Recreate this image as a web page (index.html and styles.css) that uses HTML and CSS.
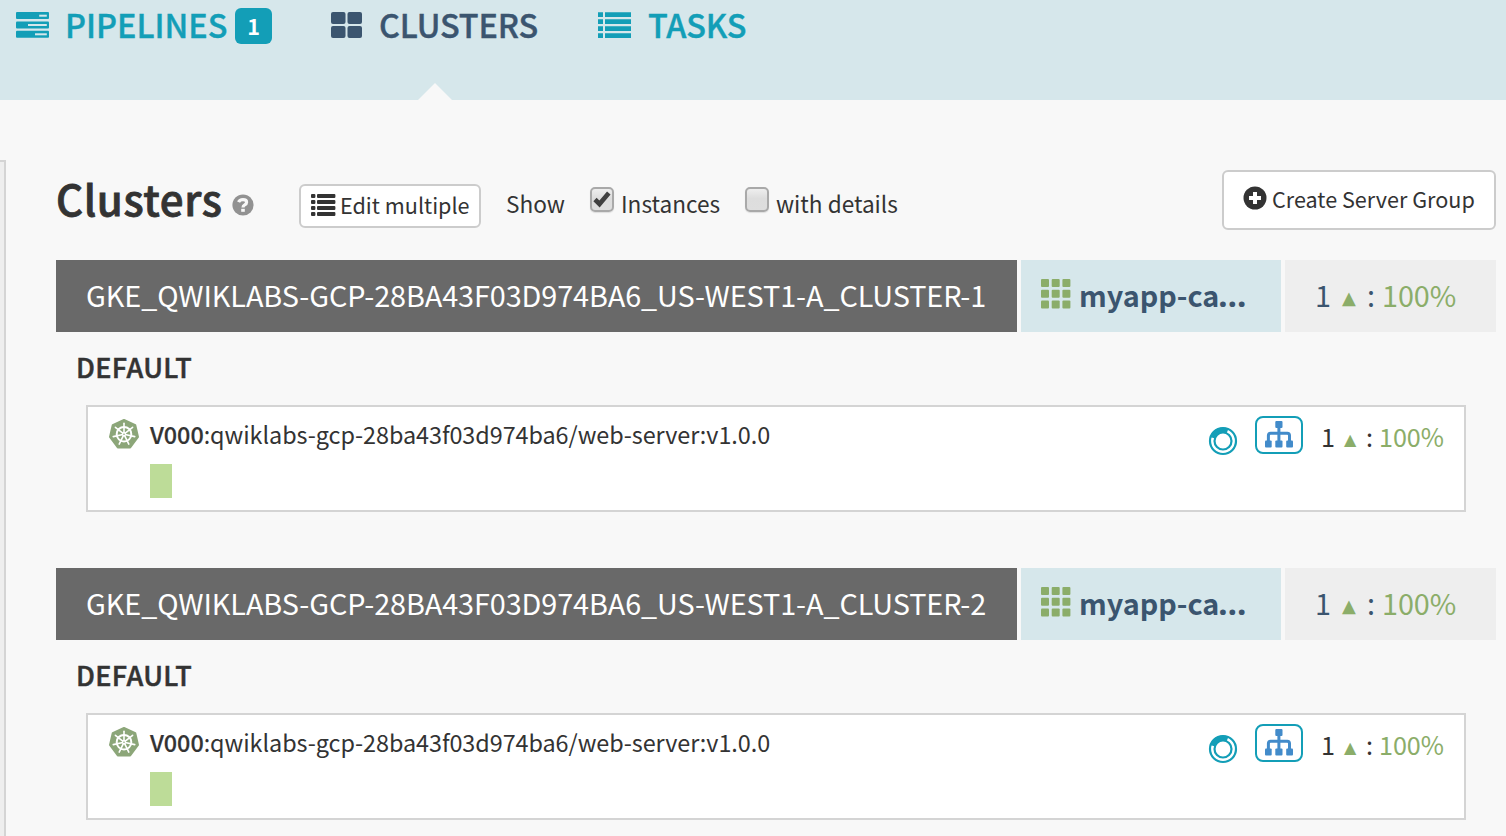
FILE: index.html
```html
<!DOCTYPE html>
<html lang="en">
<head>
<meta charset="utf-8">
<title>Clusters</title>
<link rel="stylesheet" href="styles.css">
</head>
<body>
<svg class="defs" width="0" height="0" aria-hidden="true">
  <symbol id="i-grid" viewBox="0 0 30 30">
    <g fill="currentColor"><rect width="8" height="8" rx="1"/><rect x="10.7" width="8" height="8" rx="1"/><rect x="21.4" width="8" height="8" rx="1"/><rect y="10.7" width="8" height="8" rx="1"/><rect x="10.7" y="10.7" width="8" height="8" rx="1"/><rect x="21.4" y="10.7" width="8" height="8" rx="1"/><rect y="21.4" width="8" height="8" rx="1"/><rect x="10.7" y="21.4" width="8" height="8" rx="1"/><rect x="21.4" y="21.4" width="8" height="8" rx="1"/></g>
  </symbol>
  <symbol id="i-k8s" viewBox="0 0 30 30">
    <path fill="#8ca679" stroke="#8ca679" stroke-width="2" stroke-linejoin="round" d="M15 1 L26.3 6.1 L29 18 L21.2 28.5 L8.8 28.5 L1 18 L3.7 6.1 Z"/>
    <g stroke="#fff" fill="none">
      <circle cx="15" cy="15.2" r="7.3" stroke-width="2"/>
      <g stroke-width="1.6" stroke-linecap="round">
        <path id="spoke" d="M15 14V4.2"/>
        <use href="#spoke" transform="rotate(51.43 15 15.2)"/><use href="#spoke" transform="rotate(102.86 15 15.2)"/><use href="#spoke" transform="rotate(154.29 15 15.2)"/><use href="#spoke" transform="rotate(205.71 15 15.2)"/><use href="#spoke" transform="rotate(257.14 15 15.2)"/><use href="#spoke" transform="rotate(308.57 15 15.2)"/>
      </g>
    </g>
    <circle cx="15" cy="15.2" r="2.1" fill="#fff"/><circle cx="15" cy="15.2" r=".8" fill="#8ca679"/>
  </symbol>
  <symbol id="i-ring" viewBox="0 0 30 30">
    <g fill="none" stroke="#139eb7"><circle cx="15" cy="15" r="13" stroke-width="2.2"/><circle cx="15" cy="15" r="8.5" stroke-width="2.2"/><path stroke-width="5" d="M4.6 11.8A10.9 10.9 0 0 1 19.5 5.1"/></g>
  </symbol>
  <symbol id="i-tree" viewBox="0 0 28 27">
    <g fill="#428bca"><rect x="10.3" width="7.2" height="7" rx="1"/><rect y="19.5" width="6.7" height="7" rx="1"/><rect x="10.3" y="19.5" width="7.2" height="7" rx="1"/><rect x="21.2" y="19.5" width="6.8" height="7" rx="1"/></g>
    <path fill="none" stroke="#428bca" stroke-width="3" d="M13.9 6V20M3.4 20V14.5Q3.4 12.2 5.6 12.2H22.3Q24.5 12.2 24.5 14.5V20"/>
  </symbol>
</svg>

<nav class="tabs">
  <a class="tab pipelines">
    <svg class="tab-icon" width="33" height="26" viewBox="0 0 33 26"><g fill="currentColor"><rect width="33" height="7" rx="1"/><rect y="9.4" width="33" height="7" rx="1"/><rect y="18.8" width="33" height="7" rx="1"/></g><g fill="#d6e7eb"><rect x="23.2" y="2.7" width="7.6" height="2"/><rect x="12" y="12" width="18.8" height="2"/><rect x="19" y="21.3" width="11.8" height="2"/></g></svg>
    <span class="tab-text">PIPELINES</span><span class="badge">1</span>
  </a>
  <a class="tab clusters">
    <svg class="tab-icon" width="31" height="26" viewBox="0 0 31 26"><g fill="currentColor"><rect y="0" width="14.5" height="12" rx="2"/><rect x="16.5" width="14.5" height="12" rx="2"/><rect y="14" width="14.5" height="12" rx="2"/><rect x="16.5" y="14" width="14.5" height="12" rx="2"/></g></svg>
    <span class="tab-text">CLUSTERS</span>
  </a>
  <a class="tab tasks">
    <svg class="tab-icon" width="33" height="26" viewBox="0 0 33 26"><path fill="currentColor" d="M0 .3h5v4.6H0zM7 .3h26v4.6H7zM0 7.3h5v4.6H0zM7 7.3h26v4.6H7zM0 14.3h5v4.6H0zM7 14.3h26v4.6H7zM0 21.3h5v4.6H0zM7 21.3h26v4.6H7z"/></svg>
    <span class="tab-text">TASKS</span>
  </a>
</nav>

<div class="content">
  <aside class="side"></aside>
  <main class="main">
    <header class="toolbar">
      <h1>Clusters</h1>
      <svg class="help" width="22" height="22" viewBox="0 0 22 22"><circle cx="11" cy="11" r="10.6" fill="#929292"/><path fill="none" stroke="#f8f8f8" stroke-width="3.2" d="M6.6 8.2Q7.6 5.7 11 5.7Q14.6 5.7 14.6 8.3Q14.6 9.9 12.7 10.9Q11 11.8 11 13.4"/><rect x="9.2" y="14.8" width="3.6" height="3" fill="#f8f8f8"/></svg>
      <button class="btn edit"><svg width="25" height="22" viewBox="0 0 25 22"><g fill="#333"><rect width="4.4" height="4" rx="1"/><rect x="6" width="18.4" height="4" rx="1"/><rect y="6" width="4.4" height="4" rx="1"/><rect x="6" y="6" width="18.4" height="4" rx="1"/><rect y="12" width="4.4" height="4" rx="1"/><rect x="6" y="12" width="18.4" height="4" rx="1"/><rect y="18" width="4.4" height="4" rx="1"/><rect x="6" y="18" width="18.4" height="4" rx="1"/></g></svg><span>Edit multiple</span></button>
      <span class="opt show">Show</span>
      <span class="check"><svg width="18" height="18" viewBox="0 0 18 18"><path d="M2 9.5 6.5 14 15.8 3" fill="none" stroke="#404040" stroke-width="4.6"/></svg></span>
      <span class="opt instances">Instances</span>
      <span class="check"></span>
      <span class="opt details">with details</span>
      <button class="btn create"><svg width="24" height="24" viewBox="0 0 24 24"><circle cx="12" cy="12" r="11.5" fill="#333"/><path d="M12 6v12M6 12h12" stroke="#fff" stroke-width="4"/></svg><span>Create Server Group</span></button>
    </header>

    <section class="cluster">
      <div class="bar">
        <div class="account">GKE_QWIKLABS-GCP-28BA43F03D974BA6_US-WEST1-A_CLUSTER-1</div>
        <div class="app"><svg width="30" height="30"><use href="#i-grid"/></svg><span class="app-name">myapp-ca<span class="dots">…</span></span></div>
        <div class="health"><span class="n">1</span><span class="up">▲</span><span class="colon">:</span><span class="pct">100%</span></div>
      </div>
      <h2>DEFAULT</h2>
      <div class="card">
        <svg class="k8s" width="30" height="30"><use href="#i-k8s"/></svg>
        <div class="info"><div class="name"><b>V000</b><span>:qwiklabs-gcp-28ba43f03d974ba6/web-server:v1.0.0</span></div><i class="instance"></i></div>
        <svg class="ring" width="30" height="30"><use href="#i-ring"/></svg>
        <span class="lb"><svg width="28" height="27"><use href="#i-tree"/></svg></span>
        <div class="health small"><span class="n">1</span><span class="up">▲</span><span class="colon">:</span><span class="pct">100%</span></div>
      </div>
    </section>

    <section class="cluster">
      <div class="bar">
        <div class="account">GKE_QWIKLABS-GCP-28BA43F03D974BA6_US-WEST1-A_CLUSTER-2</div>
        <div class="app"><svg width="30" height="30"><use href="#i-grid"/></svg><span class="app-name">myapp-ca<span class="dots">…</span></span></div>
        <div class="health"><span class="n">1</span><span class="up">▲</span><span class="colon">:</span><span class="pct">100%</span></div>
      </div>
      <h2>DEFAULT</h2>
      <div class="card">
        <svg class="k8s" width="30" height="30"><use href="#i-k8s"/></svg>
        <div class="info"><div class="name"><b>V000</b><span>:qwiklabs-gcp-28ba43f03d974ba6/web-server:v1.0.0</span></div><i class="instance"></i></div>
        <svg class="ring" width="30" height="30"><use href="#i-ring"/></svg>
        <span class="lb"><svg width="28" height="27"><use href="#i-tree"/></svg></span>
        <div class="health small"><span class="n">1</span><span class="up">▲</span><span class="colon">:</span><span class="pct">100%</span></div>
      </div>
    </section>
  </main>
</div>
</body>
</html>
```

FILE: styles.css
```css
* { box-sizing: border-box; }
html, body { margin: 0; height: 836px; overflow: hidden; }
body {
  background: #f8f8f8;
  color: #333;
  font-family: "Noto Sans CJK SC", "Noto Sans", sans-serif;
  font-size: 23.4px;
  line-height: 36px;
  white-space: nowrap;
}
svg { display: block; flex: none; }
.defs { position: absolute; }

.tabs { display: flex; align-items: flex-start; height: 100px; background: #d6e7eb; padding-left: 16px; color: #139eb7; }
.tab { display: flex; height: 100px; padding-top: 6px; position: relative; }
.tab-icon { margin-top: 6px; }
.tab-text { font-size: 32.4px; font-weight: 500; letter-spacing: -.1px; -webkit-text-stroke: .4px currentColor; }
.pipelines { width: 315px; }
.pipelines .tab-text { margin-left: 16px; width: 170px; letter-spacing: 0; }
.badge { width: 37px; height: 36px; margin-top: 2px; border-radius: 6px; background: #139eb7; color: #fff; font-size: 21.6px; font-weight: 700; text-align: center; line-height: 35px; }
.clusters { width: 267px; color: #3b556f; }
.clusters .tab-text { margin-left: 17px; }
.clusters::after { content: ""; position: absolute; left: 87px; bottom: 0; border: 17px solid transparent; border-top: 0; border-bottom-color: #f8f8f8; }
.tasks .tab-text { margin-left: 17px; }

.content { display: flex; height: 736px; padding-top: 60px; }
.side { width: 6px; flex: none; background: #eee; border: solid #d4d4d4; border-width: 2px 2px 0 0; }
.main { width: 1440px; margin-left: 50px; }

.toolbar { display: flex; align-items: flex-start; height: 100px; }
h1 { margin: 13px 0 0; width: 176px; font-size: 42px; line-height: 50px; font-weight: 500; letter-spacing: .6px; -webkit-text-stroke: .8px currentColor; }
.help { margin-top: 34px; }
.btn { display: flex; align-items: flex-start; border: 2px solid #ccc; border-radius: 6px; background: #fff; color: #333; font: inherit; font-size: 21.6px; padding: 0; flex: none; }
.edit { width: 182px; height: 44px; margin: 24px 0 0 45px; padding-left: 10px; }
.edit svg { margin-top: 8px; }
.edit span { margin: 1px 0 0 4px; }
.opt { margin-top: 26px; font-size: 22.6px; }
.show { margin-left: 25px; width: 84px; }
.check { width: 24px; height: 25px; margin-top: 27px; border: 2px solid #a9a9a9; border-radius: 5px; background: linear-gradient(#eee, #ddd 45%, #dedede); box-shadow: 0 1px 1px #ddd; padding: 1px; flex: none; }
.instances { margin-left: 7px; width: 124px; }
.details { margin-left: 7px; }
.create { width: 274px; height: 60px; margin: 10px 0 0 auto; padding-left: 19px; }
.create svg { margin-top: 14px; }
.create span { margin: 9px 0 0 5px; }

.cluster { height: 308px; }
.bar { display: flex; gap: 4px; height: 72px; }
.account { width: 961px; padding-left: 30px; background: #696969; color: #fff; font-size: 28.8px; line-height: 70px; letter-spacing: -.09px; }
.app { display: flex; width: 260px; padding-left: 20px; background: #d6e7eb; color: #3b556f; }
.app svg { margin-top: 19px; color: #8bad69; }
.app-name { margin-left: 8px; font-size: 28.8px; line-height: 70px; font-weight: 700; }
.dots { font-family: "Noto Sans", sans-serif; font-size: 33px; line-height: 1; margin-left: -1px; }
.health { display: flex; width: 211px; padding-left: 30px; background: #eee; color: #3b556f; font-size: 28.8px; line-height: 70px; }
.health .n { width: 27px; }
.up { width: 25px; color: #8bad69; font-family: "DejaVu Sans", sans-serif; font-size: 18px; line-height: 76px; }
.colon { width: 15px; }
.pct { color: #8bad69; letter-spacing: -.1px; }
h2 { margin: 17px 0 0 20px; height: 56px; font-size: 27px; line-height: 36px; font-weight: 500; letter-spacing: .4px; -webkit-text-stroke: .5px currentColor; }
.card { display: flex; align-items: flex-start; width: 1380px; height: 107px; margin-left: 30px; border: 2px solid #d4d4d4; background: #fff; }
.k8s { margin: 12px 0 0 21px; }
.info { width: 1058px; margin: 8px 0 0 11px; }
.name { height: 49px; line-height: 38px; letter-spacing: -.06px; }
.name b { font-weight: 500; -webkit-text-stroke: .2px currentColor; }
.instance { display: block; width: 22px; height: 34px; background: #bddc98; }
.ring { margin-top: 19px; }
.lb { display: flex; width: 48px; height: 38px; margin: 9px 0 0 17px; border: 2px solid #139eb7; border-radius: 8px; padding: 3px 0 0 8px; }
.small { width: auto; padding: 0; margin: 11px 0 0 18px; background: none; color: #333; font-size: 25.2px; line-height: 36px; }
.small .n { width: 23px; }
.small .up { width: 22px; font-size: 16px; line-height: 43px; }
.small .colon { width: 13px; }
```
